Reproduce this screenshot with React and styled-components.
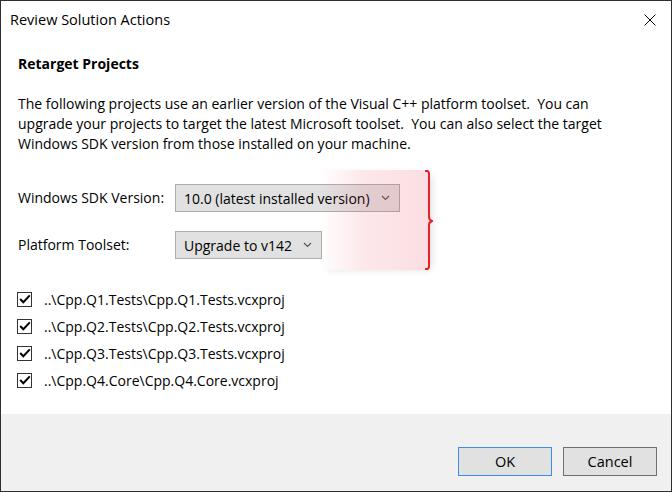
import React from 'react';
import styled, { createGlobalStyle } from 'styled-components';

const GlobalStyle = createGlobalStyle`
  html, body { margin: 0; padding: 0; background: #fff; }
  * { box-sizing: border-box; }
`;

const Window = styled.div`
  width: 672px;
  height: 492px;
  border: 1px solid #2e2e2e;
  display: flex;
  flex-direction: column;
  font-family: "Open Sans", "Noto Sans", sans-serif;
  font-size: 14px;
  color: #000;
  background: #fff;
`;

const TitleBar = styled.div`
  height: 37px;
  flex-shrink: 0;
  display: flex;
  align-items: center;
  justify-content: space-between;
  padding: 0 15px 0 9px;
`;

const Title = styled.span`
  font-size: 14.5px;
  color: #000;
`;

const Body = styled.div`
  flex: 1;
  padding: 16px 17px 0 17px;
  display: flex;
  flex-direction: column;
`;

const Heading = styled.div`
  font-weight: 700;
  line-height: 20px;
`;

const Para = styled.p`
  margin: 20px 0 0;
  line-height: 20px;
  white-space: nowrap;
`;

const Settings = styled.div`
  position: relative;
  margin-top: 30px;
  display: grid;
  grid-template-columns: 157px auto;
  row-gap: 19px;
  align-items: center;
  justify-items: start;
`;

const Label = styled.span`
  line-height: 28px;
`;

const Select = styled.div`
  height: 28px;
  display: flex;
  align-items: center;
  gap: 11px;
  padding: 0 9px 0 8px;
  background: #e1e1e1;
  border: 1px solid #adadad;
`;

const Callout = styled.div`
  position: absolute;
  left: 302px;
  top: -14px;
  width: 109px;
  height: 100px;
  border-radius: 0 5px 5px 0;
  background: linear-gradient(
    to right,
    rgba(235, 60, 80, 0) 0%,
    rgba(235, 60, 80, 0.12) 40%,
    rgba(235, 60, 80, 0.17) 100%
  );
  box-shadow: 5px 2px 8px -3px rgba(0, 0, 0, 0.15);
  pointer-events: none;
`;

const Brace = styled.svg`
  position: absolute;
  right: -4px;
  top: 0;
`;

const List = styled.div`
  margin: 31px 0 0 -1px;
  display: flex;
  flex-direction: column;
  gap: 9px;
`;

const Row = styled.label`
  display: flex;
  align-items: center;
  gap: 12px;
  height: 18px;
`;

const Box = styled.span`
  width: 15px;
  height: 15px;
  border: 1px solid #333;
  background: #fff;
  display: flex;
  align-items: center;
  justify-content: center;
`;

const Footer = styled.div`
  height: 77px;
  flex-shrink: 0;
  background: #f0f0f0;
  display: flex;
  justify-content: flex-end;
  align-items: flex-start;
  gap: 11px;
  padding: 33px 14px 0 0;
`;

const Button = styled.button`
  width: 94px;
  height: 29px;
  padding: 0;
  font-family: inherit;
  font-size: 14.5px;
  color: #000;
  background: #e1e1e1;
  border: 1px solid ${p => (p.$primary ? '#3a8ee6' : '#707070')};
`;

const Chevron = () => (
  <svg width="9" height="6" viewBox="0 0 9 6">
    <path d="M1 1 L4.5 4.5 L8 1" fill="none" stroke="#555" strokeWidth="1.2" />
  </svg>
);

const Check = () => (
  <svg width="12" height="10" viewBox="0 0 12 10">
    <path d="M1.2 5 L4.3 8.2 L10.8 1.4" fill="none" stroke="#000" strokeWidth="2" />
  </svg>
);

const projects = [
  '..\\Cpp.Q1.Tests\\Cpp.Q1.Tests.vcxproj',
  '..\\Cpp.Q2.Tests\\Cpp.Q2.Tests.vcxproj',
  '..\\Cpp.Q3.Tests\\Cpp.Q3.Tests.vcxproj',
  '..\\Cpp.Q4.Core\\Cpp.Q4.Core.vcxproj',
];

export default function App() {
  return (
    <>
      <GlobalStyle />
      <Window>
        <TitleBar>
          <Title>Review Solution Actions</Title>
          <svg width="12" height="12" viewBox="0 0 12 12">
            <path d="M0.5 0.5 L11.5 11.5 M11.5 0.5 L0.5 11.5" stroke="#000" strokeWidth="1" />
          </svg>
        </TitleBar>
        <Body>
          <Heading>Retarget Projects</Heading>
          <Para>
            The following projects use an earlier version of the Visual C++ platform toolset.&nbsp; You can
            <br />
            upgrade your projects to target the latest Microsoft toolset.&nbsp; You can also select the target
            <br />
            Windows SDK version from those installed on your machine.
          </Para>
          <Settings>
            <Label>Windows SDK Version:</Label>
            <Select>10.0 (latest installed version) <Chevron /></Select>
            <Label>Platform Toolset:</Label>
            <Select>Upgrade to v142 <Chevron /></Select>
            <Callout>
              <Brace width="8" height="100" viewBox="0 0 8 100">
                <path
                  d="M0 1 H2 Q4 1 4 4 V47 Q4 50 7 51 Q4 52 4 55 V96 Q4 99 2 99 H0"
                  fill="none"
                  stroke="#e8202a"
                  strokeWidth="2"
                />
              </Brace>
            </Callout>
          </Settings>
          <List>
            {projects.map(p => (
              <Row key={p}>
                <Box><Check /></Box>
                {p}
              </Row>
            ))}
          </List>
        </Body>
        <Footer>
          <Button $primary>OK</Button>
          <Button>Cancel</Button>
        </Footer>
      </Window>
    </>
  );
}
